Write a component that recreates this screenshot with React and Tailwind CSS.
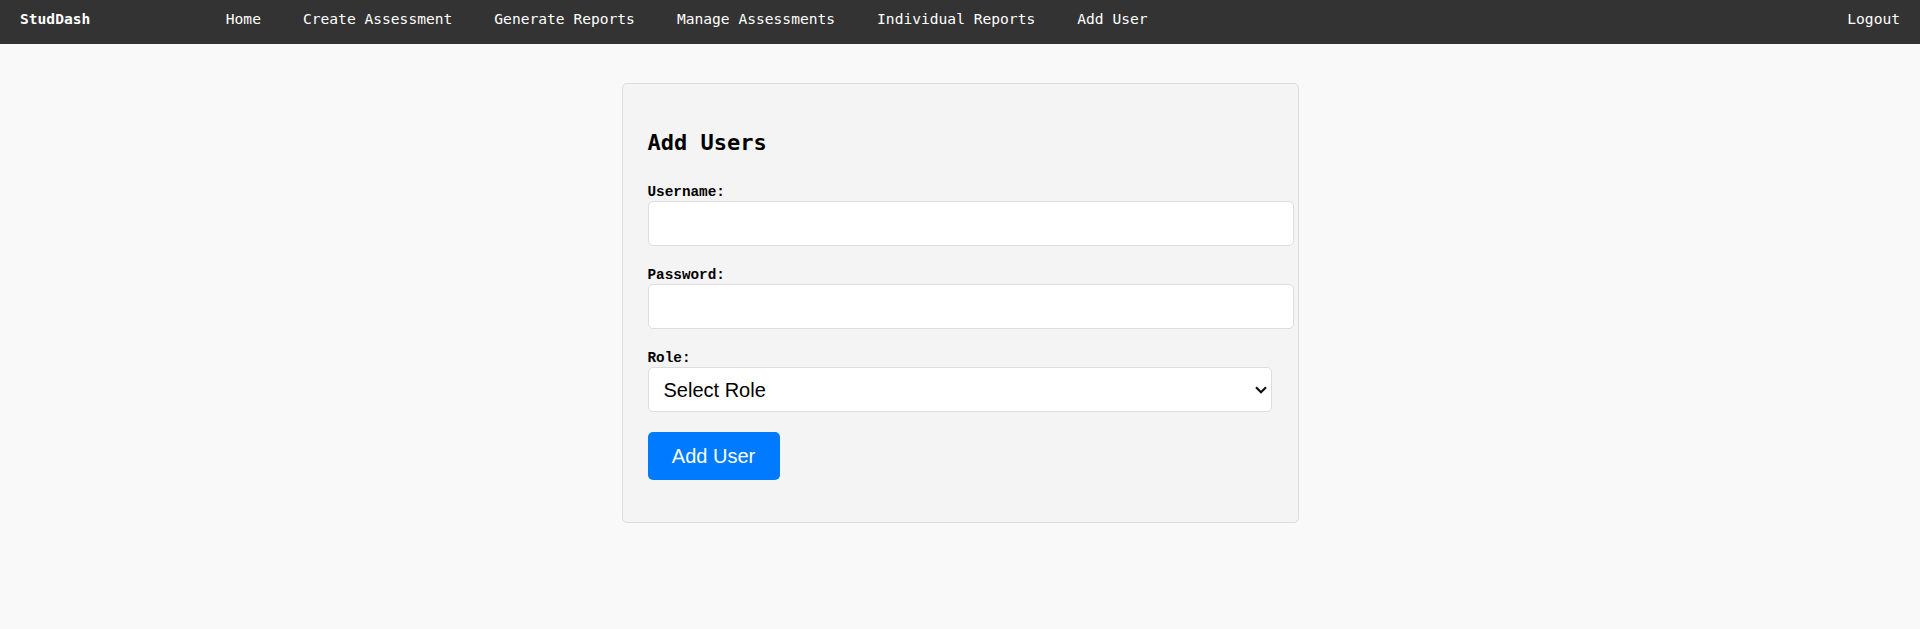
import { useState } from "react";

const navLinks = [
  "Home",
  "Create Assessment",
  "Generate Reports",
  "Manage Assessments",
  "Individual Reports",
  "Add User",
];

function Navbar() {
  return (
    <nav className="flex h-[44px] items-start bg-[#333333] px-5 pt-[10px] font-['DejaVu_Sans_Mono',monospace] text-[14.6px] leading-[17px] text-white">
      <span className="font-bold">StudDash</span>
      <ul className="ml-[135.5px] flex gap-[42px]">
        {navLinks.map((link) => (
          <li key={link}>
            <a href="#">{link}</a>
          </li>
        ))}
      </ul>
      <a href="#" className="ml-auto">
        Logout
      </a>
    </nav>
  );
}

function Field({ label, children }) {
  return (
    <div className="mb-[21px]">
      <label className="mb-px block font-['Liberation_Mono',monospace] text-[14.33px] font-bold leading-[16px] text-black">
        {label}
      </label>
      {children}
    </div>
  );
}

export default function App() {
  const [username, setUsername] = useState("");
  const [password, setPassword] = useState("");
  const [role, setRole] = useState("");

  return (
    <div className="min-h-screen bg-[#f9f9f9]">
      <Navbar />

      {/* Add user card */}
      <div className="flex justify-center pt-[39px]">
        <div className="w-[677px] rounded-[5px] border border-[#dddddd] bg-[#f4f4f4] px-[25px] pb-[42px] pt-[46px]">
          <h2 className="mb-[28px] font-['DejaVu_Sans_Mono',monospace] text-[22px] font-bold leading-[26px] text-black">
            Add Users
          </h2>

          <form onSubmit={(e) => e.preventDefault()}>
            <Field label="Username:">
              <input
                type="text"
                value={username}
                onChange={(e) => setUsername(e.target.value)}
                className="block h-[45px] w-[646px] rounded-[5px] border border-[#dddddd] bg-white px-[10px] font-['Liberation_Sans',sans-serif] text-[16px] outline-none"
              />
            </Field>

            <Field label="Password:">
              <input
                type="password"
                value={password}
                onChange={(e) => setPassword(e.target.value)}
                className="block h-[45px] w-[646px] rounded-[5px] border border-[#dddddd] bg-white px-[10px] font-['Liberation_Sans',sans-serif] text-[16px] outline-none"
              />
            </Field>

            <div className="mb-[20px]">
              <label className="mb-px block font-['Liberation_Mono',monospace] text-[14.33px] font-bold leading-[16px] text-black">
                Role:
              </label>
              <div className="relative w-[624px]">
                <select
                  value={role}
                  onChange={(e) => setRole(e.target.value)}
                  className="block h-[45px] w-full appearance-none rounded-[5px] border border-[#dddddd] bg-white pl-[15px] font-['Liberation_Sans',sans-serif] text-[20px] text-black outline-none"
                >
                  <option value="">Select Role</option>
                  <option value="admin">Admin</option>
                  <option value="teacher">Teacher</option>
                  <option value="student">Student</option>
                </select>
                <svg
                  className="pointer-events-none absolute right-[5px] top-[19px]"
                  width="12"
                  height="8"
                  viewBox="0 0 12 8"
                  fill="none"
                >
                  <path
                    d="M1 1.2 L6 6.2 L11 1.2"
                    stroke="#111111"
                    strokeWidth="2.2"
                  />
                </svg>
              </div>
            </div>

            <button
              type="submit"
              className="h-[48px] w-[132px] rounded-[5px] bg-[#007bff] font-['Liberation_Sans',sans-serif] text-[20px] leading-[24px] text-white"
            >
              Add User
            </button>
          </form>
        </div>
      </div>
    </div>
  );
}
